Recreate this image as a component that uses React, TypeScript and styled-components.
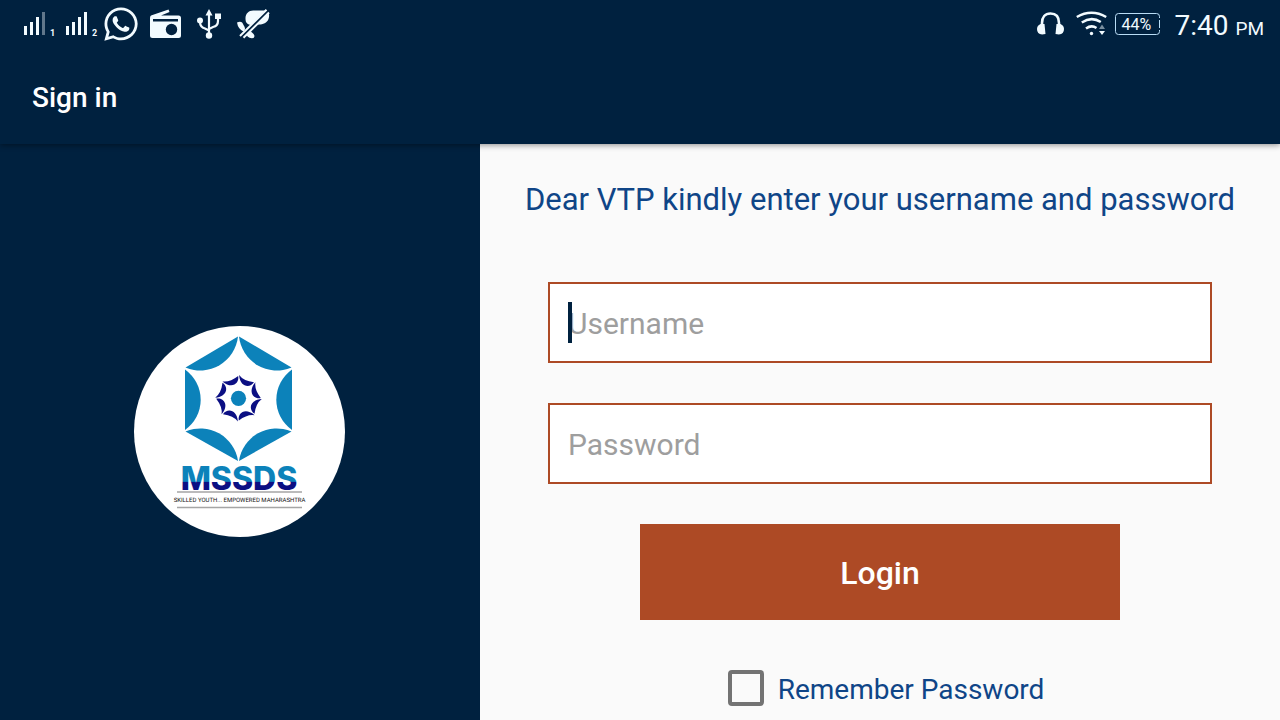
import React from 'react';
import styled, { createGlobalStyle } from 'styled-components';
import { FaWhatsapp } from 'react-icons/fa';

const NAVY = '#00213f';
const RUST = '#ad4a25';
const BLUE = '#0f4587';

const GlobalStyle = createGlobalStyle`
  *, *::before, *::after { box-sizing: border-box; }
  body {
    margin: 0;
    background: #fafafa;
    font-family: Roboto, "Noto Sans", sans-serif;
  }
`;

const Page = styled.div`
  display: flex;
  flex-direction: column;
  min-height: 100vh;
`;

const Header = styled.header`
  position: relative;
  z-index: 1;
  background: ${NAVY};
  color: #fff;
  box-shadow: 0 1px 6px rgba(0, 0, 0, 0.45);
`;

const StatusBar = styled.div`
  display: flex;
  align-items: center;
  justify-content: space-between;
  height: 48px;
  padding: 0 16px 0 24px;
  color: #f2fbff;
`;

const StatusGroup = styled.div<{ $gap: number }>`
  display: flex;
  align-items: center;
  gap: ${(p) => p.$gap}px;
`;

const Signal = styled.span`
  display: flex;
  align-items: flex-end;
  gap: 4px;
  width: 32px;
  height: 24px;
  font-size: 9px;
  font-weight: 700;
  line-height: 6px;
`;

const Icon = styled.svg`
  display: block;
  flex: none;
  fill: currentColor;
`;

const Battery = styled.span`
  display: flex;
  position: relative;
  align-items: center;
  width: 45px;
  height: 22px;
  padding-left: 6px;
  margin-left: -4px;
  font-size: 16px;
`;

const BatteryOutline = styled.svg`
  position: absolute;
  inset: 0;
  fill: none;
  stroke: #b9dcf5;
`;

const Clock = styled.span`
  font-size: 28px;
  line-height: 32px;
  margin-left: 2px;
  padding-top: 6px;
`;

const Meridiem = styled.small`
  font-size: 19px;
`;

const AppBar = styled.div`
  display: flex;
  align-items: center;
  height: 96px;
  padding: 4px 32px 0;
`;

const Title = styled.h1`
  margin: 0;
  font-size: 28px;
  line-height: 36px;
  font-weight: 500;
`;

const Content = styled.main`
  display: grid;
  grid-template-columns: 3fr 5fr;
  flex: 1;
`;

const Brand = styled.aside`
  display: flex;
  align-items: center;
  justify-content: center;
  background: ${NAVY};
`;

const Wordmark = styled.text`
  font-family: Inter, Roboto, sans-serif;
  font-weight: 800;
  font-size: 32px;
`;

const Tagline = styled.text`
  font-family: Roboto, sans-serif;
  font-size: 6px;
  text-rendering: geometricPrecision;
  fill: #111;
`;

const Form = styled.form`
  display: flex;
  flex-direction: column;
  align-items: center;
  padding: 36px 40px 12px;
  background: #fafafa;
`;

const Prompt = styled.p`
  margin: 0 0 62px;
  color: ${BLUE};
  font-size: 31px;
  line-height: 40px;
  white-space: nowrap;
`;

const Field = styled.div<{ $caret?: boolean }>`
  position: relative;
  width: calc(100% - 56px);
  margin-bottom: 40px;

  &::before {
    content: "";
    display: ${(p) => (p.$caret ? 'block' : 'none')};
    position: absolute;
    left: 20px;
    top: 20px;
    width: 4px;
    height: 41px;
    background: ${NAVY};
  }
`;

const TextInput = styled.input`
  display: block;
  width: 100%;
  height: 81px;
  padding: 2px 18px 0;
  border: 2px solid ${RUST};
  border-radius: 0;
  background: #fff;
  color: ${NAVY};
  font: 30px Roboto, sans-serif;
  outline: none;

  &::placeholder { color: #9e9e9e; opacity: 1; }
`;

const LoginButton = styled.button`
  width: calc(66% + 4px);
  height: 96px;
  margin-bottom: 48px;
  padding: 2px 0 0;
  border: 0;
  background: ${RUST};
  color: #fff;
  font: 500 32px Roboto, sans-serif;
  cursor: pointer;
`;

const Remember = styled.label`
  display: flex;
  align-items: center;
  gap: 14px;
  margin-left: 12px;
  color: ${BLUE};
  font-size: 28px;
  line-height: 36px;
`;

const RememberText = styled.span`
  padding-top: 4px;
`;

const Checkbox = styled.input`
  appearance: none;
  width: 36px;
  height: 36px;
  margin: 0;
  border: 4px solid #737373;
  border-radius: 4px;

  &:checked { background: ${RUST}; }
`;

function SignalBars({ strength, sim }: { strength: number; sim: number }) {
  const tops = [14, 10, 5, 0];
  return (
    <Signal>
      <Icon width="22" height="24" viewBox="0 0 22 24">
        {tops.map((top, i) => (
          <rect key={top} x={i * 6} y={top} width="3" height={23 - top} opacity={i < strength ? 1 : 0.4} />
        ))}
      </Icon>
      {sim}
    </Signal>
  );
}

const RadioIcon = () => (
  <Icon width="31" height="30" viewBox="0 0 31 30">
    <path d="M1 6.5 18.500 .5 19.500 3 11 6.500H28.500Q31 6.500 31 9V26.500Q31 29 28.500 29H2.500Q0 29 0 26.500V9Q0 7.300 1 6.500Z" />
    <rect x="3" y="10" width="25" height="2.500" fill={NAVY} />
    <circle cx="21.500" cy="20.500" r="5.700" fill={NAVY} />
  </Icon>
);

const UsbIcon = () => (
  <Icon width="24" height="30" viewBox="0 0 24 30">
    <path
      d="M12 5V26M3 11.500V13Q3 18 8 19.500L12 21.500M21 8V12Q21 17 16 18L12 20"
      fill="none" stroke="currentColor" strokeWidth="2.200"
    />
    <path d="M12 0 15.500 6.500H8.500ZM18 4.500H24V10H18Z" />
    <circle cx="3" cy="11.500" r="3" />
    <circle cx="12" cy="26.500" r="3.200" />
  </Icon>
);

const MutedIcon = () => (
  <Icon width="33" height="30" viewBox="0 0 33 30">
    <path d="M9 13C7 6 11 1 17 1.500H27C32 2 33 6 31.500 10C30 14 26 15.500 22 15.500Q12 18 9 13Z" />
    <path d="M0 13.500Q5 11 6.500 16Q9.500 20 6.500 22.500Q1 20 0 13.500ZM9 24Q12 20.500 15 23.500Q19 26.500 16.500 29Q10 30 9 24Z" />
    <path d="M4.500 28 31 1.500" stroke={NAVY} strokeWidth="4" />
    <path d="M3 27 29.500 .8M6.500 28.800 32 3.500" stroke="currentColor" strokeWidth="2" />
  </Icon>
);

const HeadphonesIcon = () => (
  <Icon width="27" height="24" viewBox="0 0 27 24">
    <path d="M5 14V11C5 5 8 1.500 13.500 1.500S22 5 22 11V14" fill="none" stroke="currentColor" strokeWidth="2.600" />
    <path d="M3.500 12H7.500L8.500 22Q0 24 0 17Q0 13.500 3.500 12ZM23.500 12H19.500L18.500 22Q27 24 27 17Q27 13.500 23.500 12Z" />
  </Icon>
);

const WifiIcon = () => (
  <Icon width="31" height="26" viewBox="0 0 31 26">
    <g fill="none" stroke="currentColor" strokeWidth="2.500">
      <path d="M.8 6Q15.500-2.500 30.200 6" />
      <path d="M5.800 11.500Q15.500 5 24.800 11" />
      <path d="M10 17.500Q15.500 13.500 20.500 17" />
    </g>
    <circle cx="15.500" cy="22.500" r="1.700" />
    <path d="M23 18 26 13.500 29 18Z" opacity="0.5" />
    <path d="M23 20H29L26 24Z" />
  </Icon>
);

// Petals of the inner wheel: one every 45 degrees around the hub.
const PETALS = [0, 45, 90, 135, 180, 225, 270, 315];

function Logo() {
  return (
    <svg width="212" height="212" viewBox="134 326 212 212" role="img" aria-label="MSSDS">
      <defs>
        <linearGradient id="wordmark" gradientUnits="userSpaceOnUse" x1="0" y1="466" x2="0" y2="490">
          <stop offset="0.64" stopColor="#0c82ba" />
          <stop offset="0.68" stopColor="#0b0f83" />
        </linearGradient>
      </defs>
      <circle cx="239.500" cy="431.500" r="105.500" fill="#fff" />
      <g fill="#0c82ba">
        <path d="M238 336.500 185.500 367.500A38 38 0 0 0 238 336.500Z" />
        <path d="M239 336.500 291.500 367.500A38 38 0 0 1 239 336.500Z" />
        <path d="M185 369.500V430A37 37 0 0 0 185 369.500Z" />
        <path d="M292 369.500V430A37 37 0 0 1 292 369.500Z" />
        <path d="M185.500 431.500 238 461A38 38 0 0 0 185.500 431.500Z" />
        <path d="M291.500 431.500 239 461A38 38 0 0 1 291.500 431.500Z" />
        <circle cx="238.500" cy="398.300" r="7.600" />
      </g>
      <g fill="#0b0f83">
        {PETALS.map((angle) => (
          <path
            key={angle}
            d="M239.100 375Q243.500 381 254 382.300C250 388.500 240 387.500 239.100 375Z"
            transform={`rotate(${angle} 238.500 398.300)`}
          />
        ))}
      </g>
      <Wordmark x="239" y="490" textAnchor="middle" fill="url(#wordmark)">MSSDS</Wordmark>
      <path d="M177 492H302M177 507.500H302" stroke="#a5a5a5" strokeWidth="1.300" />
      <Tagline x="239.500" y="502" textAnchor="middle">SKILLED YOUTH... EMPOWERED MAHARASHTRA</Tagline>
    </svg>
  );
}

export default function App() {
  return (
    <Page>
      <GlobalStyle />
      <Header>
        <StatusBar>
          <StatusGroup $gap={10}>
            <StatusGroup $gap={4}>
              <StatusGroup $gap={10}>
                <SignalBars strength={3} sim={1} />
                <SignalBars strength={4} sim={2} />
              </StatusGroup>
              <FaWhatsapp size={38} />
            </StatusGroup>
            <StatusGroup $gap={16}>
              <RadioIcon />
              <UsbIcon />
              <MutedIcon />
            </StatusGroup>
          </StatusGroup>
          <StatusGroup $gap={12}>
            <HeadphonesIcon />
            <WifiIcon />
            <Battery>
              <BatteryOutline width="45" height="22" viewBox="0 0 45 22">
                <path d="M44.500 5V3.500Q44.500 .5 41.500 .5H3.500Q.5 .5 .5 3.500V18.500Q.5 21.500 3.500 21.500H41.500Q44.500 21.500 44.500 18.500V17M44.500 7V15" />
              </BatteryOutline>
              44%
            </Battery>
            <Clock>7:40 <Meridiem>PM</Meridiem></Clock>
          </StatusGroup>
        </StatusBar>
        <AppBar>
          <Title>Sign in</Title>
        </AppBar>
      </Header>
      <Content>
        <Brand>
          <Logo />
        </Brand>
        <Form onSubmit={(e) => e.preventDefault()}>
          <Prompt>Dear VTP kindly enter your username and password</Prompt>
          <Field $caret>
            <TextInput type="text" placeholder="Username" aria-label="Username" />
          </Field>
          <Field>
            <TextInput type="password" placeholder="Password" aria-label="Password" />
          </Field>
          <LoginButton type="submit">Login</LoginButton>
          <Remember>
            <Checkbox type="checkbox" />
            <RememberText>Remember Password</RememberText>
          </Remember>
        </Form>
      </Content>
    </Page>
  );
}
